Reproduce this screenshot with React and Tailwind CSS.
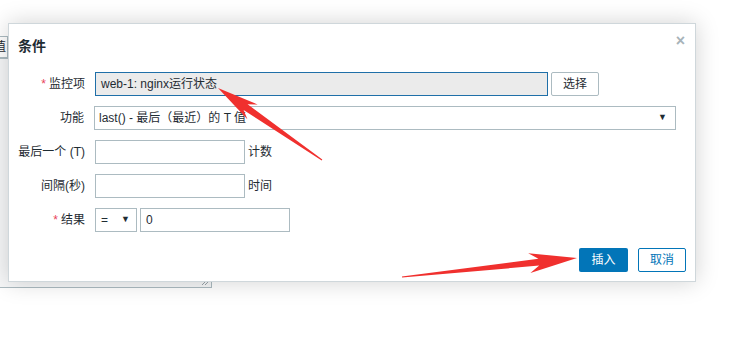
import React from "react";

function arrowPoints(tx, ty, hx, hy, headLen, headW, tailW, neckW) {
  const dx = hx - tx;
  const dy = hy - ty;
  const len = Math.hypot(dx, dy);
  const ux = dx / len;
  const uy = dy / len;
  const nx = -uy;
  const ny = ux;
  const bx = hx - ux * headLen;
  const by = hy - uy * headLen;
  const cx = hx - ux * headLen * 0.8;
  const cy = hy - uy * headLen * 0.8;
  const p = [
    [tx + nx * tailW, ty + ny * tailW],
    [cx + nx * neckW, cy + ny * neckW],
    [bx + nx * headW, by + ny * headW],
    [hx, hy],
    [bx - nx * headW, by - ny * headW],
    [cx - nx * neckW, cy - ny * neckW],
    [tx - nx * tailW, ty - ny * tailW],
  ];
  return p.map(([x, y]) => `${x.toFixed(1)},${y.toFixed(1)}`).join(" ");
}

function Row({ label, required, children }) {
  return (
    <div className="flex items-center h-[24px]">
      <div className="w-[77px] pr-[10px] text-right text-[12px] text-[#1f2c33] whitespace-nowrap">
        {required && <span className="text-[#e8425a] mr-[3px]">*</span>}
        {label}
      </div>
      <div className="flex items-center flex-1 h-full">{children}</div>
    </div>
  );
}

export default function App() {
  return (
    <div className="relative w-[755px] h-[356px] overflow-hidden bg-white font-['Arial','Liberation_Sans','Noto_Sans_CJK_SC',sans-serif]">
      {/* page behind the dialog */}
      <div className="flex flex-col pt-[36px]">
        <div className="ml-[-60px] w-[68px] h-[22px] border border-[#acbbc1] text-[12px] leading-[20px] text-right pr-[1px] text-[#1f2c33]">
          值
        </div>
        <div className="ml-[-60px] w-[272px] h-[230px] border border-[#acbbc1] bg-[#f6f7f8] relative">
          <svg className="absolute right-[2px] bottom-[1px]" width="8" height="6" viewBox="0 0 8 6">
            <path d="M1 5 L5 1 M4 5 L8 1" stroke="#9aa5ab" strokeWidth="1" />
          </svg>
        </div>
      </div>

      {/* dialog */}
      <div className="absolute left-[8px] top-[23px] w-[688px] h-[259px] bg-white border border-[#cfd7db] shadow-[0_0_22px_rgba(0,0,0,0.18)] flex flex-col px-[9px]">
        <div className="flex justify-between pt-[13px]">
          <div className="text-[14px] leading-[18px] font-bold text-[#1f2c33]">条件</div>
          <div className="text-[#a7b3b9] text-[16px] leading-[12px] font-bold mr-[1px] mt-[-2px]">×</div>
        </div>
        <div className="flex flex-col gap-[10px] mt-[17px] pr-[10px]">
          <Row label="监控项" required>
            <div className="w-[453px] h-[24px] bg-[#ebebeb] border border-[#1f6fa8] px-[5px] text-[12px] leading-[22px] text-[#1f2c33]">
              web-1: nginx运行状态
            </div>
            <div className="ml-[3px] w-[48px] h-[24px] border border-[#acbbc1] text-[12px] leading-[22px] text-center text-[#1f2c33] rounded-[2px]">
              选择
            </div>
          </Row>
          <Row label="功能">
            <div className="flex items-center justify-between w-[582px] h-[24px] border border-[#acbbc1] pl-[4px] pr-[8px] text-[12px] text-[#1f2c33]">
              <span>last() - 最后（最近）的 T 值</span>
              <span className="text-[9px]">▼</span>
            </div>
          </Row>
          <Row label="最后一个 (T)">
            <div className="w-[150px] h-[24px] border border-[#acbbc1]" />
            <span className="ml-[3px] text-[12px] text-[#1f2c33]">计数</span>
          </Row>
          <Row label="间隔(秒)">
            <div className="w-[150px] h-[24px] border border-[#acbbc1]" />
            <span className="ml-[3px] text-[12px] text-[#1f2c33]">时间</span>
          </Row>
          <Row label="结果" required>
            <div className="flex items-center justify-between w-[42px] h-[24px] border border-[#acbbc1] pl-[5px] pr-[6px] text-[12px] text-[#1f2c33]">
              <span>=</span>
              <span className="text-[9px]">▼</span>
            </div>
            <div className="ml-[3px] w-[150px] h-[24px] border border-[#acbbc1] px-[5px] text-[12px] leading-[22px] text-[#1f2c33]">
              0
            </div>
          </Row>
        </div>
        <div className="flex justify-end gap-[10px] mt-[16px]">
          <div className="w-[49px] h-[24px] bg-[#0275b8] rounded-[2px] text-white text-[12px] leading-[24px] text-center">
            插入
          </div>
          <div className="w-[48px] h-[24px] border border-[#0275b8] rounded-[2px] text-[#0275b8] text-[12px] leading-[22px] text-center">
            取消
          </div>
        </div>
      </div>

      {/* red annotation arrows */}
      <svg className="absolute left-0 top-0 pointer-events-none" width="755" height="356">
        <polygon points={arrowPoints(322, 160, 218, 88, 42, 9, 0.6, 3.5)} fill="#f0302e" />
        <polygon points={arrowPoints(402, 277, 577, 258, 48, 10, 0.6, 3.5)} fill="#f0302e" />
      </svg>
    </div>
  );
}
